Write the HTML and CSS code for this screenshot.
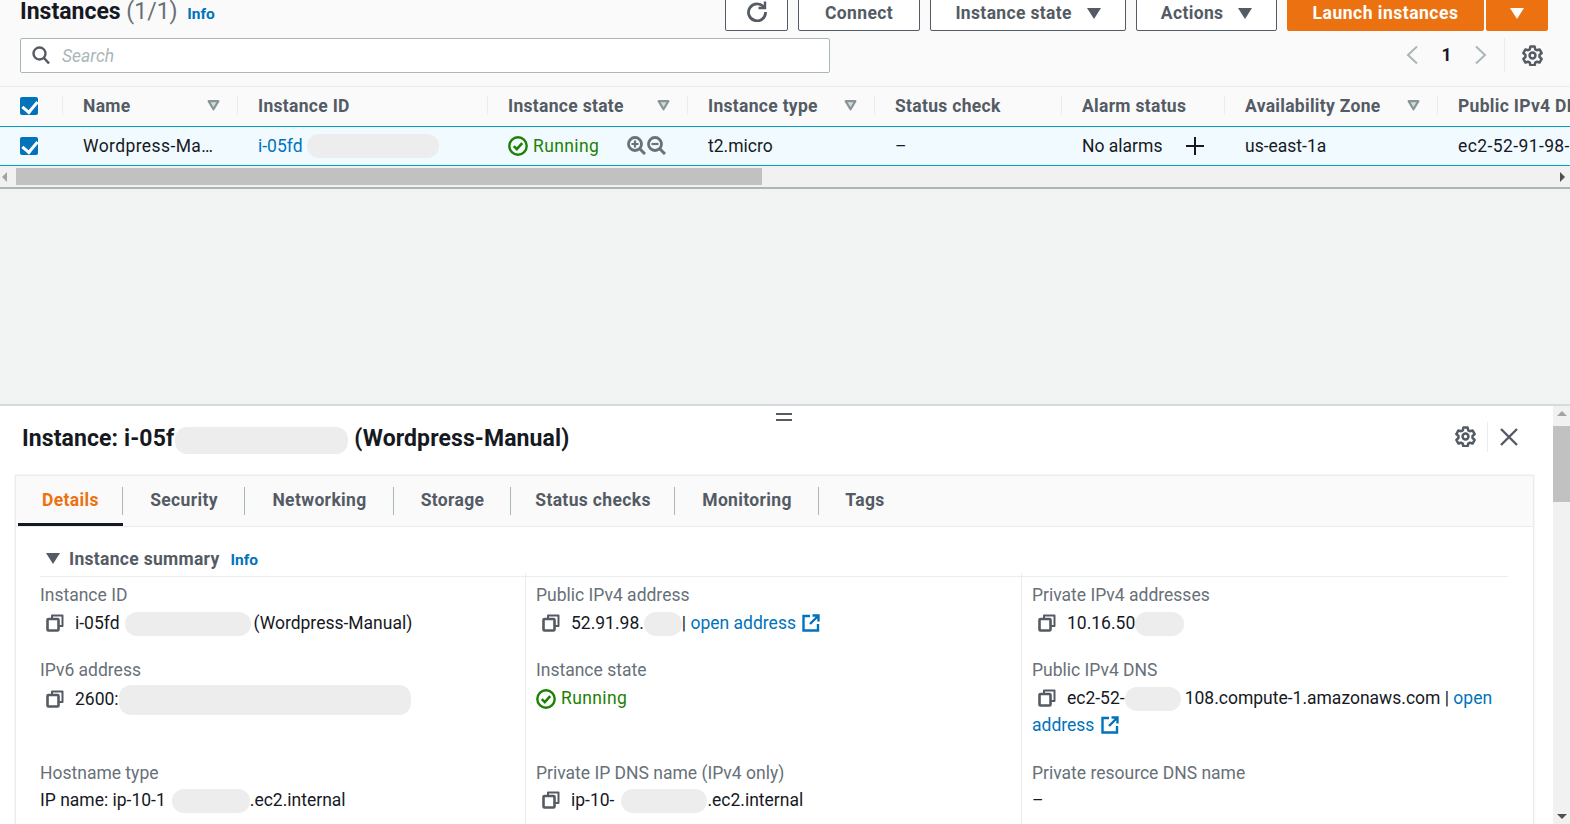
FILE: index.html
```html
<!DOCTYPE html>
<html lang="en">
<head>
  <meta charset="UTF-8"/>
  <title>Instances | EC2 Management Console</title>
  <link rel="stylesheet" href="styles.css">
</head>
<body>
<svg class="sprites" width="0" height="0">
  <symbol id="i-gear" viewBox="0 0 20 20">
    <path d="M8 1.500h4l.6 2.600 1.600.9 2.500-.8 2 3.500-2 1.800v1.900l2 1.800-2 3.500-2.500-.8-1.600.9-.6 2.600H8l-.6-2.600-1.600-.9-2.500.8-2-3.500 2-1.800V9.500l-2-1.800 2-3.500 2.500.8 1.600-.9z" fill="none" stroke="currentColor" stroke-width="2.400" stroke-linejoin="round"/>
    <circle cx="10" cy="10" r="2.800" fill="none" stroke="currentColor" stroke-width="2.400"/>
  </symbol>
  <symbol id="i-copy" viewBox="0 0 18 18">
    <path d="M6 4V1.500h10.500V12H13" fill="none" stroke="currentColor" stroke-width="2" stroke-linejoin="round"/>
    <rect x="1.500" y="5" width="11" height="11.500" rx="1" fill="none" stroke="currentColor" stroke-width="2.600"/>
  </symbol>
  <symbol id="i-ok" viewBox="0 0 20 20">
    <circle cx="10" cy="10" r="8.700" fill="none" stroke="currentColor" stroke-width="2.400"/>
    <path d="M5.800 10.200l3 3 5.400-6" fill="none" stroke="currentColor" stroke-width="2.600"/>
  </symbol>
  <symbol id="i-ext" viewBox="0 0 18 18">
    <path d="M8 2H1.500v14.500H16V10" fill="none" stroke="currentColor" stroke-width="2.400"/>
    <path d="M10.500 1.500h6v6M16 2L8 10" fill="none" stroke="currentColor" stroke-width="2.400"/>
  </symbol>
  <symbol id="i-filter" viewBox="0 0 12 10">
    <path d="M1.500 1h9L6 8.500z" fill="#d5dbdb" stroke="currentColor" stroke-width="2" stroke-linejoin="round"/>
  </symbol>
  <symbol id="i-zoom-in" viewBox="0 0 19 19">
    <circle cx="8" cy="8" r="6.500" fill="none" stroke="currentColor" stroke-width="2.800"/>
    <path d="M12.500 12.500L18 18" stroke="currentColor" stroke-width="3"/>
    <path d="M4.500 8h7M8 4.500v7" stroke="currentColor" stroke-width="2.200"/>
  </symbol>
  <symbol id="i-zoom-out" viewBox="0 0 19 19">
    <circle cx="8" cy="8" r="6.500" fill="none" stroke="currentColor" stroke-width="2.800"/>
    <path d="M12.500 12.500L18 18" stroke="currentColor" stroke-width="3"/>
    <path d="M4.500 8h7" stroke="currentColor" stroke-width="2.200"/>
  </symbol>
</svg>

<div class="top-panel">
  <div class="title-row">
    <h1 class="page-title">Instances <span class="count">(1/1)</span> <a class="info">Info</a></h1>
    <div class="actions">
      <button class="btn btn-icon">
        <svg width="22" height="22" viewBox="0 0 22 22"><path d="M18 7.500A8.500 8.500 0 1 0 19.500 12" fill="none" stroke="currentColor" stroke-width="2.800"/><path d="M19 1.500v6.500h-6.500" fill="none" stroke="currentColor" stroke-width="2.400"/></svg>
      </button>
      <button class="btn btn-connect">Connect</button>
      <button class="btn btn-state">Instance state <span class="caret"></span></button>
      <button class="btn btn-actions">Actions <span class="caret"></span></button>
      <button class="btn btn-primary btn-launch">Launch instances</button>
      <button class="btn btn-primary btn-more"><span class="caret"></span></button>
    </div>
  </div>

  <div class="search-row">
    <div class="search">
      <svg width="18" height="19" viewBox="0 0 18 19"><circle cx="7.500" cy="7.500" r="6" fill="none" stroke="currentColor" stroke-width="2.400"/><path d="M12 12l5 5.500" stroke="currentColor" stroke-width="2.600"/></svg>
      <span>Search</span>
    </div>
    <div class="pager">
      <svg class="chev" width="12" height="20" viewBox="0 0 12 20"><path d="M11 1.500L2 10l9 8.500" fill="none" stroke="currentColor" stroke-width="2"/></svg>
      <span class="page-no">1</span>
      <svg class="chev" width="12" height="20" viewBox="0 0 12 20"><path d="M1 1.500L10 10l-9 8.500" fill="none" stroke="currentColor" stroke-width="2"/></svg>
      <span class="pager-sep"></span>
      <svg class="gear" width="21" height="21"><use href="#i-gear"/></svg>
    </div>
  </div>

  <div class="table">
    <div class="thead">
      <div class="cell cell-check"><span class="check"></span></div>
      <div class="cell">Name <svg class="sort" width="13" height="11"><use href="#i-filter"/></svg></div>
      <div class="cell">Instance ID</div>
      <div class="cell">Instance state <svg class="sort" width="13" height="11"><use href="#i-filter"/></svg></div>
      <div class="cell">Instance type <svg class="sort" width="13" height="11"><use href="#i-filter"/></svg></div>
      <div class="cell">Status check</div>
      <div class="cell">Alarm status</div>
      <div class="cell">Availability Zone <svg class="sort" width="13" height="11"><use href="#i-filter"/></svg></div>
      <div class="cell">Public IPv4 DNS</div>
    </div>
    <div class="trow">
      <div class="cell cell-check"><span class="check"></span></div>
      <div class="cell cell-wide">Wordpress-Ma…</div>
      <div class="cell"><a class="link">i-05fd</a><span class="smudge smudge-row"></span></div>
      <div class="cell">
        <span class="running"><svg width="20" height="20"><use href="#i-ok"/></svg>Running</span>
        <span class="zooms">
          <svg width="19" height="19"><use href="#i-zoom-in"/></svg>
          <svg width="19" height="19"><use href="#i-zoom-out"/></svg>
        </span>
      </div>
      <div class="cell">t2.micro</div>
      <div class="cell">–</div>
      <div class="cell">No alarms <svg class="plus" width="18" height="18" viewBox="0 0 18 18"><path d="M9 0v18M0 9h18" stroke="currentColor" stroke-width="2"/></svg></div>
      <div class="cell">us-east-1a</div>
      <div class="cell cell-wide">ec2-52-91-98-108.compute-1.amazonaws.com</div>
    </div>
  </div>

  <div class="hscroll">
    <span class="arrow arrow-left"></span>
    <div class="hscroll-thumb"></div>
    <span class="arrow arrow-right"></span>
  </div>
</div>

<div class="gap-area"></div>

<div class="detail-panel">
  <div class="detail-main">
    <div class="handle"></div>
    <div class="detail-head">
      <h2 class="detail-title">Instance: i-05f<span class="smudge smudge-title"></span>(Wordpress-Manual)</h2>
      <div class="detail-tools">
        <svg class="gear" width="21" height="21"><use href="#i-gear"/></svg>
        <span class="tools-sep"></span>
        <svg class="close" width="18" height="18" viewBox="0 0 18 18"><path d="M1 1l16 16M17 1L1 17" stroke="currentColor" stroke-width="2.400"/></svg>
      </div>
    </div>

    <div class="tabs-box">
      <div class="tabs">
        <a class="tab tab-active">Details</a>
        <a class="tab tab-security">Security</a>
        <a class="tab tab-net">Networking</a>
        <a class="tab tab-storage">Storage</a>
        <a class="tab tab-status">Status checks</a>
        <a class="tab tab-monitor">Monitoring</a>
        <a class="tab tab-tags">Tags</a>
      </div>
      <div class="summary">
        <div class="summary-head">
          <span class="tri"></span>
          <span class="summary-title">Instance summary</span>
          <a class="info">Info</a>
        </div>
        <div class="fields">
          <div class="field">
            <div class="label">Instance ID</div>
            <div class="value"><svg class="copy" width="18" height="18"><use href="#i-copy"/></svg>i-05fd<span class="smudge smudge-id"></span>(Wordpress-Manual)</div>
          </div>
          <div class="field">
            <div class="label">Public IPv4 address</div>
            <div class="value"><svg class="copy" width="18" height="18"><use href="#i-copy"/></svg>52.91.98.<span class="smudge smudge-ip"></span>| <a class="link">open address</a> <svg class="ext" width="18" height="18"><use href="#i-ext"/></svg></div>
          </div>
          <div class="field">
            <div class="label">Private IPv4 addresses</div>
            <div class="value"><svg class="copy" width="18" height="18"><use href="#i-copy"/></svg>10.16.50<span class="smudge smudge-priv"></span></div>
          </div>
          <div class="field">
            <div class="label">IPv6 address</div>
            <div class="value"><svg class="copy" width="18" height="18"><use href="#i-copy"/></svg>2600:<span class="smudge smudge-v6"></span></div>
          </div>
          <div class="field">
            <div class="label">Instance state</div>
            <div class="value"><span class="running"><svg width="20" height="20"><use href="#i-ok"/></svg>Running</span></div>
          </div>
          <div class="field">
            <div class="label">Public IPv4 DNS</div>
            <div class="value"><svg class="copy" width="18" height="18"><use href="#i-copy"/></svg>ec2-52-<span class="smudge smudge-dns"></span>108.compute-1.amazonaws.com | <a class="link">open</a> <a class="link">address</a> <svg class="ext" width="18" height="18"><use href="#i-ext"/></svg></div>
          </div>
          <div class="field">
            <div class="label">Hostname type</div>
            <div class="value">IP name: ip-10-1<span class="smudge smudge-host"></span>.ec2.internal</div>
          </div>
          <div class="field">
            <div class="label">Private IP DNS name (IPv4 only)</div>
            <div class="value"><svg class="copy" width="18" height="18"><use href="#i-copy"/></svg>ip-10-<span class="smudge smudge-pdns"></span>.ec2.internal</div>
          </div>
          <div class="field">
            <div class="label">Private resource DNS name</div>
            <div class="value">–</div>
          </div>
        </div>
      </div>
    </div>
  </div>

  <div class="vscroll">
    <span class="arrow arrow-up"></span>
    <div class="vscroll-thumb"></div>
    <span class="arrow arrow-down"></span>
  </div>
</div>
</body>
</html>
```
FILE: styles.css
```css
* {
    box-sizing: border-box;
}

html, body {
    height: 100%;
}

body {
    margin: 0;
    display: flex;
    flex-direction: column;
    overflow: hidden;
    font-family: Roboto, "Liberation Sans", sans-serif;
    font-size: 17.5px;
    color: #16191f;
    background: #f2f3f3;
}

.sprites {
    position: absolute;
}

/* top table panel */
.top-panel {
    background: #fafafa;
    border-bottom: 2px solid #aab7b8;
}

.title-row {
    display: flex;
    justify-content: space-between;
    height: 31px;
    padding: 0 22px 0 20px;
}

.page-title {
    margin: -3px 0 0;
    font-size: 23px;
    font-weight: 700;
    line-height: 30px;
}

.count {
    font-weight: 400;
    color: #687078;
}

.info {
    margin-left: 4px;
    font-size: 15.5px;
    font-weight: 700;
    color: #0073bb;
}

.actions {
    display: flex;
    gap: 10px;
    margin-top: -6px;
}

.btn {
    height: 37px;
    padding: 0;
    border: 1px solid #545b64;
    border-radius: 2px;
    background: #fff;
    font: 700 17.5px Roboto, sans-serif;
    letter-spacing: 0.35px;
    color: #545b64;
}

.btn-icon { width: 63px; }
.btn-connect { width: 122px; }
.btn-state { width: 196px; }
.btn-actions { width: 141px; }

.btn-primary {
    background: #ec7211;
    border-color: #ec7211;
    color: #fff;
}

.btn-launch {
    width: 197px;
    margin-right: -8px;
    letter-spacing: 0.5px;
}

.btn-more { width: 62px; }

.caret {
    display: inline-block;
    margin-left: 10px;
    border-top: 11px solid currentColor;
    border-left: 7px solid transparent;
    border-right: 7px solid transparent;
}

.btn-more .caret {
    margin-left: 0;
}

.search-row {
    display: flex;
    justify-content: space-between;
    align-items: flex-start;
    height: 55px;
    padding: 7px 27px 0 20px;
}

.search {
    display: flex;
    align-items: center;
    gap: 12px;
    width: 810px;
    height: 35px;
    padding-left: 11px;
    border: 1px solid #aab7b8;
    border-radius: 2px;
    background: #fff;
    color: #545b64;
}

.search span {
    font-style: italic;
    color: #aab7b8;
}

.pager {
    display: flex;
    align-items: center;
    color: #545b64;
}

.chev {
    color: #aab7b8;
}

.page-no {
    width: 57px;
    text-align: center;
    font-weight: 700;
    color: #16191f;
}

.pager-sep {
    width: 1px;
    height: 34px;
    margin: 0 17px 0 17px;
    background: #eaeded;
}

/* instances table */
.thead, .trow {
    display: grid;
    grid-template-columns: 62px 175px 250px 200px 187px 187px 163px 213px 1fr;
    overflow: hidden;
}

.thead {
    height: 40px;
    padding-bottom: 2px;
    border-top: 1px solid #eaeded;
    font-weight: 700;
    letter-spacing: 0.3px;
    color: #545b64;
}

.trow {
    height: 40px;
    padding-bottom: 1px;
    border-top: 1px solid #00a1c9;
    border-bottom: 1px solid #00a1c9;
    background: #f1faff;
}

.cell {
    position: relative;
    display: flex;
    align-items: center;
    justify-content: flex-start;
    padding: 0 17px 0 21px;
    white-space: nowrap;
}

.cell-wide {
    letter-spacing: 0.4px;
}

.thead .cell::before {
    content: "";
    position: absolute;
    left: 0;
    top: 9px;
    bottom: 9px;
    width: 1px;
    background: #eaeded;
}

.thead .cell:first-child::before {
    display: none;
}

.cell-check {
    padding-left: 20px;
}

.sort {
    margin-left: auto;
    color: #879596;
}

.check {
    position: relative;
    width: 18px;
    height: 18px;
    border-radius: 2px;
    background: #0073bb;
}

.check::after {
    content: "";
    position: absolute;
    left: 5px;
    top: 1px;
    width: 7px;
    height: 12px;
    border-right: 3px solid #fff;
    border-bottom: 3px solid #fff;
    transform: rotate(40deg);
}

.link {
    color: #0073bb;
}

.running {
    display: inline-flex;
    align-items: center;
    gap: 5px;
    letter-spacing: 0.4px;
    color: #1d8102;
}

.zooms {
    display: inline-flex;
    gap: 1px;
    margin-left: 28px;
    color: #687078;
}

.plus {
    margin-left: 24px;
    color: #16191f;
}

/* blurred out values */
.smudge {
    display: inline-block;
    height: 24px;
    border-radius: 12px;
    background: #ededed;
    vertical-align: middle;
}

.smudge-row { width: 132px; margin-left: 4px; }
.smudge-title { width: 173px; height: 27px; margin: 0 6px 0 1px; }
.smudge-id { width: 126px; margin: 0 3px 0 5px; }
.smudge-ip { width: 38px; }
.smudge-priv { width: 49px; }
.smudge-v6 { width: 292px; height: 30px; }
.smudge-dns { width: 56px; margin-right: 4px; }
.smudge-host { width: 78px; margin-left: 6px; }
.smudge-pdns { width: 86px; margin-left: 7px; }

.hscroll {
    display: flex;
    align-items: center;
    height: 21px;
    background: #f1f1f1;
}

.hscroll-thumb {
    width: 746px;
    height: 17px;
    margin-left: 9px;
    background: #c1c1c1;
}

.arrow {
    width: 0;
    height: 0;
    border: 5px solid transparent;
}

.arrow-left {
    margin-left: 2px;
    border-left-width: 0;
    border-right-color: #a3a3a3;
}

.arrow-right {
    margin-left: auto;
    margin-right: 5px;
    border-right-width: 0;
    border-left-color: #505050;
}

.gap-area {
    flex: 1;
}

/* lower details panel */
.detail-panel {
    display: flex;
    height: 420px;
    border-top: 2px solid #d5dbdb;
    background: #fff;
    overflow: hidden;
}

.detail-main {
    position: relative;
    flex: 1;
    padding: 0 21px 0 15px;
}

.handle {
    position: absolute;
    left: 776px;
    top: 7px;
    width: 16px;
    height: 8px;
    border-top: 2px solid #545b64;
    border-bottom: 2px solid #545b64;
}

.detail-head {
    display: flex;
    justify-content: space-between;
    align-items: center;
    height: 69px;
    padding: 0 14px 2px 7px;
}

.detail-title {
    margin: 0;
    font-size: 23px;
    font-weight: 700;
    letter-spacing: 0.1px;
}

.detail-tools {
    display: flex;
    align-items: center;
    padding-bottom: 6px;
    color: #545b64;
}

.tools-sep {
    width: 1px;
    height: 30px;
    margin: 0 12px 0 11px;
    background: #eaeded;
}

.close {
    color: #545b64;
}

.tabs-box {
    margin-right: -2px;
    border: 1px solid #eaeded;
    border-bottom: 0;
    box-shadow: 0 0 1px rgba(0, 0, 0, 0.2);
}

.tabs {
    display: flex;
    height: 51px;
    padding-left: 2px;
    background: #fafafa;
    border-bottom: 1px solid #eaeded;
    font-weight: 700;
    letter-spacing: 0.35px;
    color: #545b64;
}

.tab {
    position: relative;
    display: flex;
    align-items: center;
    justify-content: center;
    height: 50px;
    padding-bottom: 3px;
}

.tab::after {
    content: "";
    position: absolute;
    right: 0;
    top: 11px;
    height: 28px;
    width: 1px;
    background: #aab7b8;
}

.tab-tags::after {
    display: none;
}

.tab-active {
    width: 105px;
    color: #ec7211;
    border-bottom: 3px solid #16191f;
    padding-bottom: 0;
}

.tab-security { width: 122px; }
.tab-net { width: 149px; }
.tab-storage { width: 117px; }
.tab-status { width: 164px; }
.tab-monitor { width: 144px; }
.tab-tags { width: 92px; }

.summary {
    padding: 0 25px 0 24px;
}

.summary-head {
    display: flex;
    align-items: center;
    height: 50px;
    padding: 14px 0 0 6px;
    border-bottom: 1px solid #eaeded;
    font-weight: 700;
    letter-spacing: 0.3px;
    color: #545b64;
}

.summary-head .info {
    margin: 2px 0 0 6px;
    letter-spacing: 0;
}

.tri {
    margin-right: 9px;
    border-top: 11px solid #545b64;
    border-left: 7px solid transparent;
    border-right: 7px solid transparent;
}

.summary-title {
    margin-right: 5px;
}

.fields {
    display: grid;
    grid-template-columns: 485px 496px 1fr;
    margin-top: -4px;
}

.field {
    padding: 0 0 20px 10px;
    border-left: 1px solid #eaeded;
}

.field:nth-child(-n+3) {
    padding-top: 8px;
    padding-bottom: 19px;
}

.field:nth-child(3n+1) {
    padding-left: 0;
    border-left: 0;
}

.field:nth-child(n+7) .value {
    padding-top: 0;
}

.label {
    height: 28px;
    line-height: 28px;
    color: #687078;
}

.value {
    padding-top: 1px;
    line-height: 27px;
}

.copy {
    margin: 0 11px 0 6px;
    color: #545b64;
    vertical-align: -3px;
}

.ext {
    color: #0073bb;
    vertical-align: -3px;
    margin-left: 2px;
}

.vscroll {
    display: flex;
    flex-direction: column;
    align-items: center;
    width: 17px;
    background: #f1f1f1;
}

.vscroll-thumb {
    width: 17px;
    height: 76px;
    margin-top: 10px;
    background: #c1c1c1;
}

.arrow-up {
    margin-top: 5px;
    border-top-width: 0;
    border-bottom-color: #a3a3a3;
}

.arrow-down {
    margin-top: auto;
    margin-bottom: 5px;
    border-bottom-width: 0;
    border-top-color: #505050;
}
```
